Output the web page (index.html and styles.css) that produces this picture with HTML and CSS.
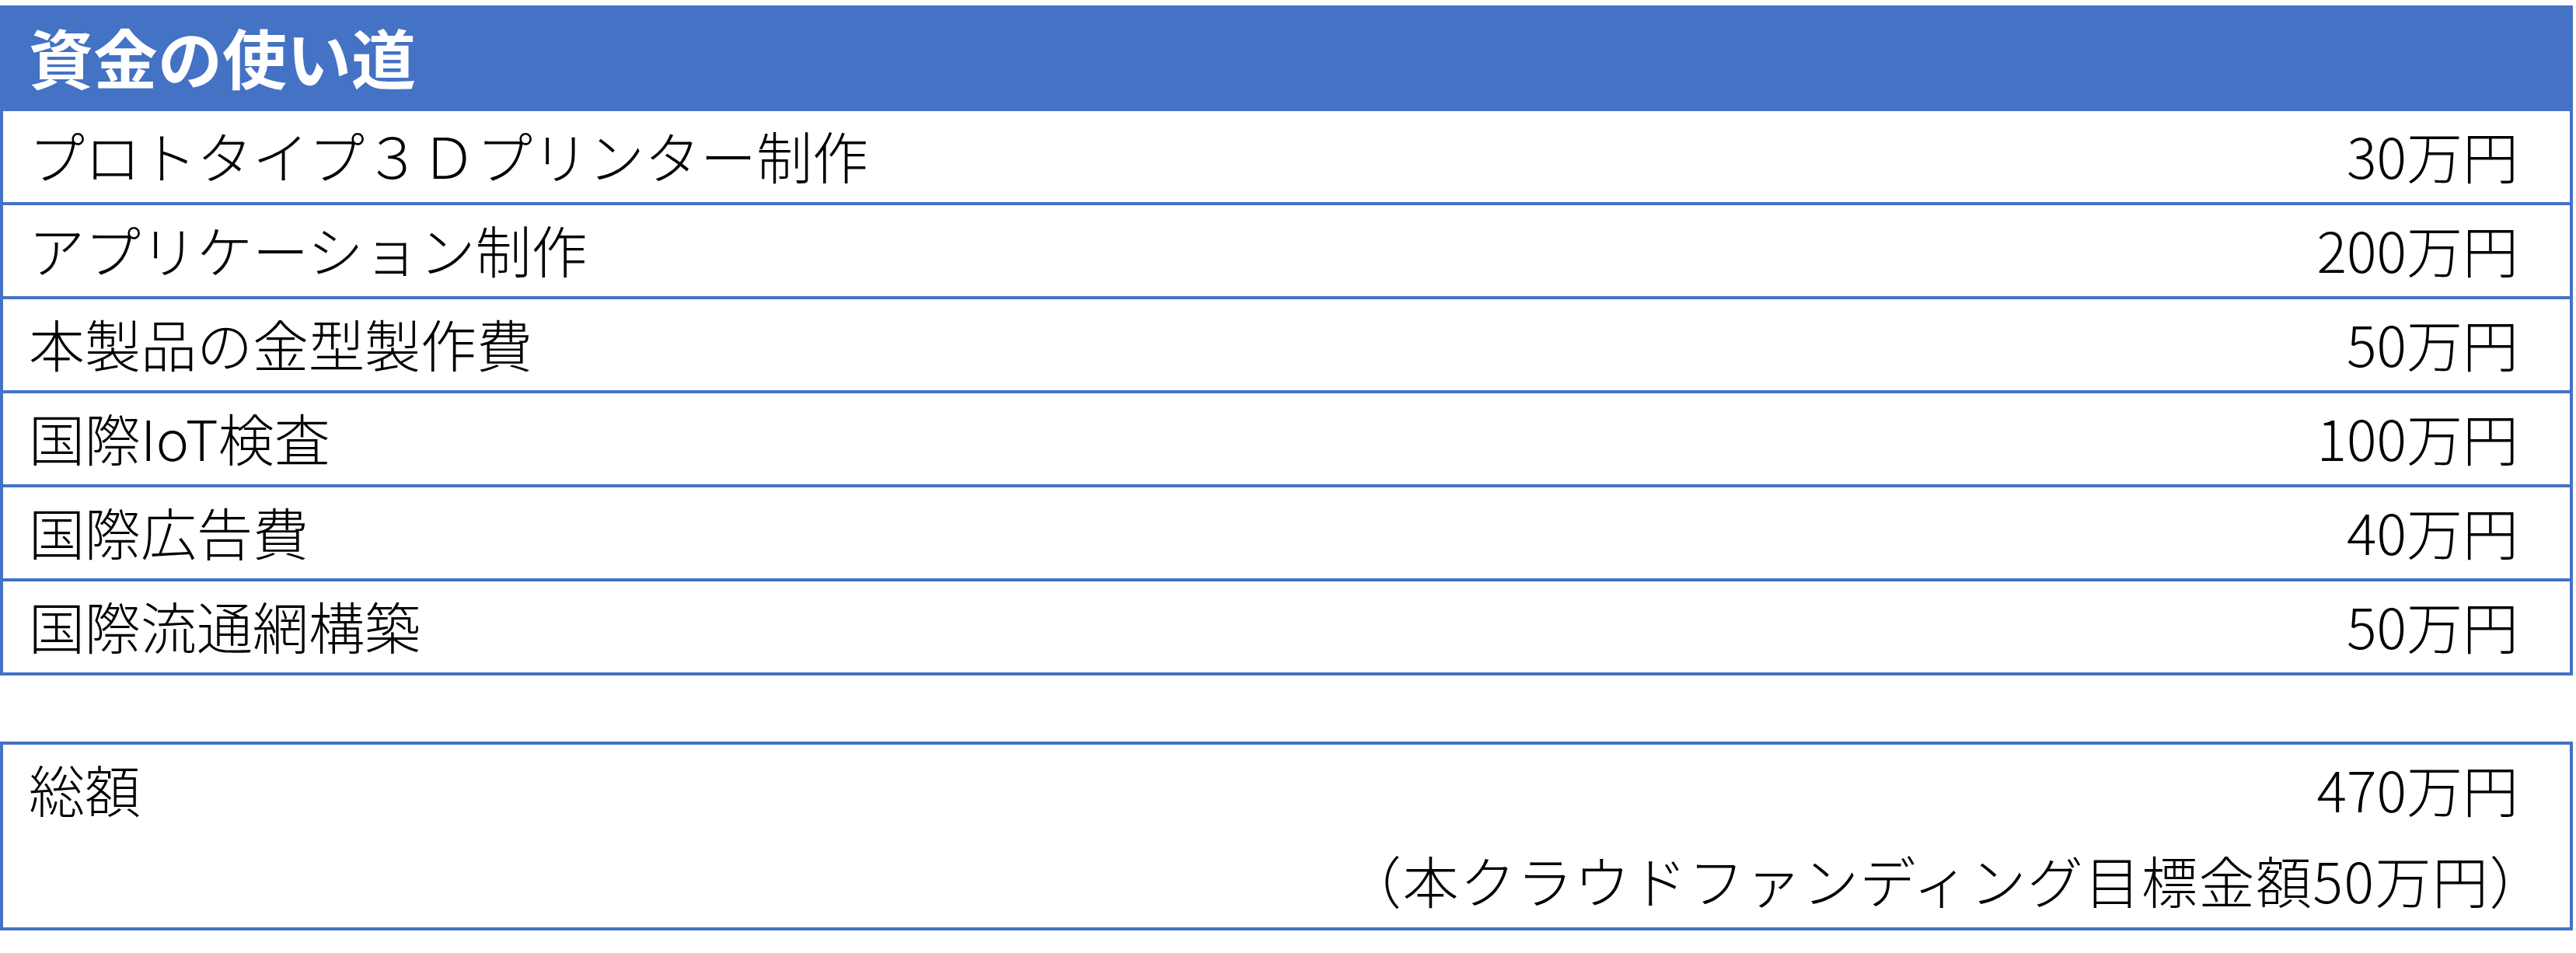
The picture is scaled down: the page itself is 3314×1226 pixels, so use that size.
FILE: index.html
```html
<!DOCTYPE html>
<html lang="ja">
<head>
<meta charset="utf-8">
<title>資金の使い道</title>
<link rel="stylesheet" href="styles.css">
</head>
<body>
<div class="sheet">
  <div class="head">資金の使い道</div>
  <div class="table">
    <div class="row"><span class="label">プロトタイプ３Ｄプリンター制作</span><span class="amount">30万円</span></div>
    <div class="row"><span class="label">アプリケーション制作</span><span class="amount">200万円</span></div>
    <div class="row"><span class="label">本製品の金型製作費</span><span class="amount">50万円</span></div>
    <div class="row"><span class="label">国際IoT検査</span><span class="amount">100万円</span></div>
    <div class="row"><span class="label">国際広告費</span><span class="amount">40万円</span></div>
    <div class="row"><span class="label">国際流通網構築</span><span class="amount">50万円</span></div>
  </div>
  <div class="total">
    <div class="total-line"><span class="label">総額</span><span class="amount">470万円</span></div>
    <div class="note">（本クラウドファンディング目標金額50万円）</div>
  </div>
</div>
</body>
</html>
```
FILE: styles.css
```css
html, body {
  margin: 0;
  padding: 0;
  background: #ffffff;
}
body {
  padding-top: 7px;
  font-family: "Noto Sans CJK JP", "Noto Sans", sans-serif;
  color: #000000;
}
.sheet {
  width: 3310px;
  display: flex;
  flex-direction: column;
}
.head {
  height: 136px;
  box-sizing: border-box;
  background: #4472c4;
  color: #ffffff;
  font-size: 83px;
  font-weight: 700;
  line-height: 1;
  display: flex;
  align-items: center;
  padding-left: 37px;
  padding-bottom: 6px;
}
.table {
  border-left: 4px solid #4472c4;
  border-right: 4px solid #4472c4;
  display: flex;
  flex-direction: column;
}
.row {
  height: 121px;
  box-sizing: border-box;
  border-bottom: 4px solid #4472c4;
  display: flex;
  align-items: center;
  justify-content: space-between;
  padding: 0 66px 6px 33px;
  font-size: 72px;
  font-weight: 300;
  line-height: 1;
}
.total {
  margin-top: 85px;
  height: 243px;
  box-sizing: border-box;
  border: 4px solid #4472c4;
  display: flex;
  flex-direction: column;
  font-size: 72px;
  font-weight: 300;
  line-height: 1;
}
.total-line {
  height: 118px;
  display: flex;
  align-items: center;
  justify-content: space-between;
  padding: 0 66px 6px 33px;
}
.note {
  height: 117px;
  display: flex;
  align-items: center;
  justify-content: flex-end;
  padding: 0 30px 6px 33px;
  letter-spacing: 1.5px;
}
```
